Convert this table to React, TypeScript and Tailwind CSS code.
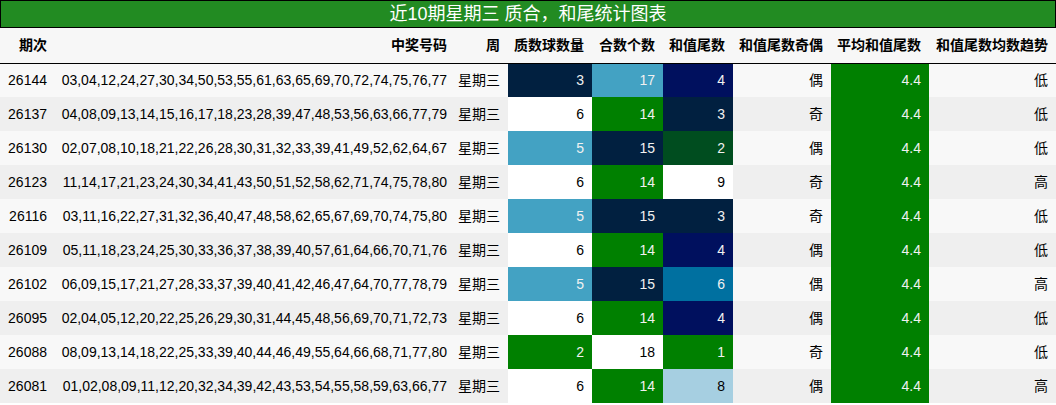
import React from "react";

// Colour cells by value, the way the report tool paints them
const C = {
  navy: "bg-[#012040] text-[#f1f1f1]",
  blue: "bg-[#43a2c3] text-[#f1f1f1]",
  green: "bg-[#008000] text-[#f1f1f1]",
  white: "bg-white text-black",
  navy2: "bg-[#00105e] text-[#f1f1f1]",
  dgreen: "bg-[#004d1f] text-[#f1f1f1]",
  sea: "bg-[#0070a0] text-[#f1f1f1]",
  light: "bg-[#a6cfe1] text-black",
};

const primeColor: Record<number, string> = { 3: C.navy, 6: C.white, 5: C.blue, 2: C.green };
const compColor: Record<number, string> = { 17: C.blue, 14: C.green, 15: C.navy, 18: C.white };
const tailColor: Record<number, string> = {
  4: C.navy2,
  3: C.navy,
  2: C.dgreen,
  9: C.white,
  6: C.sea,
  1: C.green,
  8: C.light,
};

interface Row {
  issue: string;
  nums: string;
  prime: number;
  comp: number;
  tail: number;
  parity: string;
  trend: string;
}

const ROWS: Row[] = [
  { issue: "26144", nums: "03,04,12,24,27,30,34,50,53,55,61,63,65,69,70,72,74,75,76,77", prime: 3, comp: 17, tail: 4, parity: "偶", trend: "低" },
  { issue: "26137", nums: "04,08,09,13,14,15,16,17,18,23,28,39,47,48,53,56,63,66,77,79", prime: 6, comp: 14, tail: 3, parity: "奇", trend: "低" },
  { issue: "26130", nums: "02,07,08,10,18,21,22,26,28,30,31,32,33,39,41,49,52,62,64,67", prime: 5, comp: 15, tail: 2, parity: "偶", trend: "低" },
  { issue: "26123", nums: "11,14,17,21,23,24,30,34,41,43,50,51,52,58,62,71,74,75,78,80", prime: 6, comp: 14, tail: 9, parity: "奇", trend: "高" },
  { issue: "26116", nums: "03,11,16,22,27,31,32,36,40,47,48,58,62,65,67,69,70,74,75,80", prime: 5, comp: 15, tail: 3, parity: "奇", trend: "低" },
  { issue: "26109", nums: "05,11,18,23,24,25,30,33,36,37,38,39,40,57,61,64,66,70,71,76", prime: 6, comp: 14, tail: 4, parity: "偶", trend: "低" },
  { issue: "26102", nums: "06,09,15,17,21,27,28,33,37,39,40,41,42,46,47,64,70,77,78,79", prime: 5, comp: 15, tail: 6, parity: "偶", trend: "高" },
  { issue: "26095", nums: "02,04,05,12,20,22,25,26,29,30,31,44,45,48,56,69,70,71,72,73", prime: 6, comp: 14, tail: 4, parity: "偶", trend: "低" },
  { issue: "26088", nums: "08,09,13,14,18,22,25,33,39,40,44,46,49,55,64,66,68,71,77,80", prime: 2, comp: 18, tail: 1, parity: "奇", trend: "低" },
  { issue: "26081", nums: "01,02,08,09,11,12,20,32,34,39,42,43,53,54,55,58,59,63,66,77", prime: 6, comp: 14, tail: 8, parity: "偶", trend: "高" },
];

const HEADERS = ["期次", "中奖号码", "周", "质数球数量", "合数个数", "和值尾数", "和值尾数奇偶", "平均和值尾数", "和值尾数均数趋势"];
const WIDTHS = ["w-[55px]", "w-[400px]", "w-[53px]", "w-[84px]", "w-[71px]", "w-[70px]", "w-[98px]", "w-[98px]", "w-[127px]"];

const cell = "h-[34px] px-0 pr-[8px] text-right whitespace-nowrap";

export default function App() {
  return (
    <div className="w-[1056px] bg-white text-[14px] text-black font-['Liberation_Sans','Noto_Sans_CJK_SC',sans-serif]">
      <div className="h-[28px] border border-black bg-[#228b22] text-white text-[18px] leading-[26px] text-center">
        近10期星期三 质合，和尾统计图表
      </div>
      <table className="w-[1056px] table-fixed border-collapse">
        <colgroup>
          {WIDTHS.map((w, i) => (
            <col key={i} className={w} />
          ))}
        </colgroup>
        <thead>
          <tr className="bg-[#f7f7f7] border-b border-black">
            {HEADERS.map((h) => (
              <th key={h} className="h-[35px] pr-[8px] text-right font-bold whitespace-nowrap">
                {h}
              </th>
            ))}
          </tr>
        </thead>
        <tbody>
          {ROWS.map((r, i) => (
            <tr key={r.issue} className={i % 2 === 0 ? "bg-[#f8f8f8]" : "bg-[#efefef]"}>
              <td className={cell}>{r.issue}</td>
              <td className={cell}>{r.nums}</td>
              <td className={`${cell} pr-[7px]`}>星期三</td>
              <td className={`${cell} ${primeColor[r.prime]}`}>{r.prime}</td>
              <td className={`${cell} ${compColor[r.comp]}`}>{r.comp}</td>
              <td className={`${cell} ${tailColor[r.tail]}`}>{r.tail}</td>
              <td className={cell}>{r.parity}</td>
              <td className={`${cell} ${C.green}`}>4.4</td>
              <td className={cell}>{r.trend}</td>
            </tr>
          ))}
        </tbody>
      </table>
    </div>
  );
}
